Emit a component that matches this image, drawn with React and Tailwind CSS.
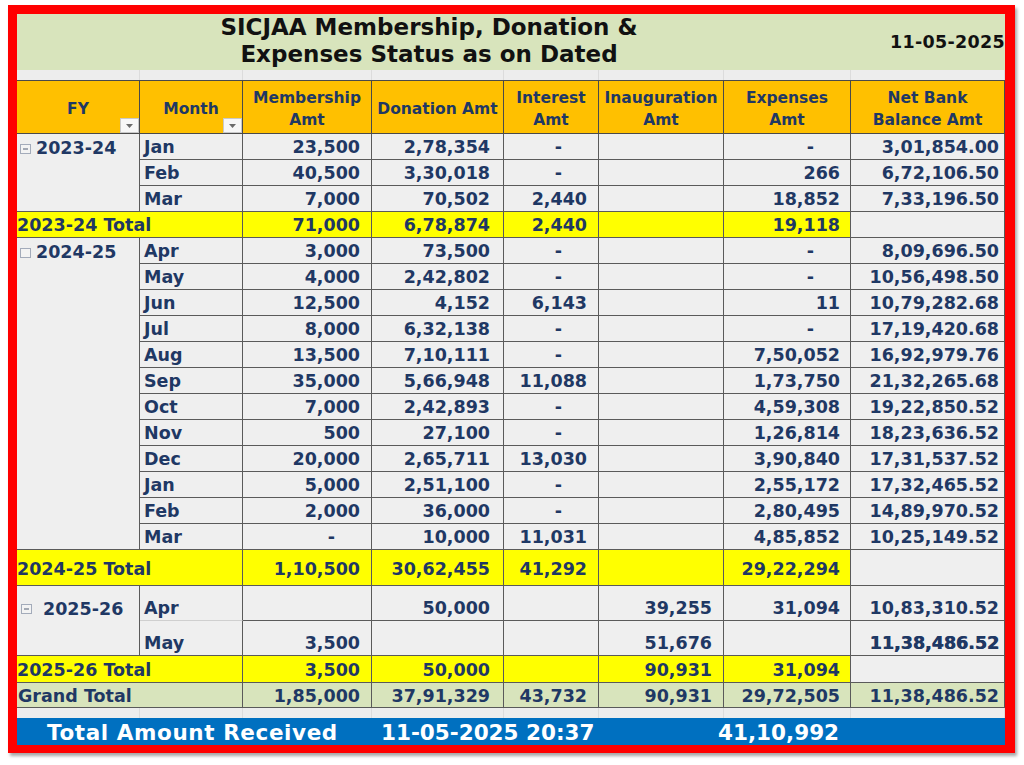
import { Fragment } from 'react';

const COLS = 'grid grid-cols-[123px_103px_129px_132px_95px_125px_127px_154px]';
const LINE = 'border-r border-b border-[#5a5a5a]';
const PADS = ['pr-[11px]', 'pr-[13px]', 'pr-[11px]', 'pr-[11px]', 'pr-[10px]', 'pr-[5px]'];

const fy2324 = [
  ['Jan', '23,500', '2,78,354', '-', '', '-', '3,01,854.00'],
  ['Feb', '40,500', '3,30,018', '-', '', '266', '6,72,106.50'],
  ['Mar', '7,000', '70,502', '2,440', '', '18,852', '7,33,196.50'],
];

const fy2425 = [
  ['Apr', '3,000', '73,500', '-', '', '-', '8,09,696.50'],
  ['May', '4,000', '2,42,802', '-', '', '-', '10,56,498.50'],
  ['Jun', '12,500', '4,152', '6,143', '', '11', '10,79,282.68'],
  ['Jul', '8,000', '6,32,138', '-', '', '-', '17,19,420.68'],
  ['Aug', '13,500', '7,10,111', '-', '', '7,50,052', '16,92,979.76'],
  ['Sep', '35,000', '5,66,948', '11,088', '', '1,73,750', '21,32,265.68'],
  ['Oct', '7,000', '2,42,893', '-', '', '4,59,308', '19,22,850.52'],
  ['Nov', '500', '27,100', '-', '', '1,26,814', '18,23,636.52'],
  ['Dec', '20,000', '2,65,711', '13,030', '', '3,90,840', '17,31,537.52'],
  ['Jan', '5,000', '2,51,100', '-', '', '2,55,172', '17,32,465.52'],
  ['Feb', '2,000', '36,000', '-', '', '2,80,495', '14,89,970.52'],
  ['Mar', '-', '10,000', '11,031', '', '4,85,852', '10,25,149.52'],
];

const fy2526 = [
  ['Apr', '', '50,000', '', '39,255', '31,094', '10,83,310.52'],
  ['May', '3,500', '', '', '51,676', '', '11,38,486.52'],
];

function Toggle({ minus }) {
  return (
    <svg width="11" height="10" viewBox="0 0 11 10" className="shrink-0">
      <rect x="0.5" y="0.5" width="10" height="9" fill="#f3f3f3" stroke="#a3abba" />
      {minus && <line x1="3" x2="8" y1="5" y2="5" stroke="#6d7789" strokeWidth="1.2" />}
    </svg>
  );
}

function Filter() {
  return (
    <div className="absolute right-0 bottom-0 w-[19px] h-[15px] bg-[#f7f7f7] border border-[#c9c9c9] flex items-center justify-center">
      <svg width="7" height="4" viewBox="0 0 7 4">
        <path d="M0 0 L7 0 L3.5 4 Z" fill="#6b6b6b" />
      </svg>
    </div>
  );
}

function DataRow({ row, tall, lightMonth, heavyNet }) {
  const [month, ...vals] = row;
  const h = tall ? 'h-[35px] items-end pb-[3px]' : 'h-[26px] items-center pt-[3px]';
  return (
    <>
      <div className={`flex ${h} pl-[4px] bg-[#efefef] border-r border-b border-r-[#5a5a5a] ${lightMonth ? 'border-b-[#cfcfcf]' : 'border-b-[#5a5a5a]'}`}>
        {month}
      </div>
      {vals.map((v, i) => (
        <div
          key={i}
          className={`flex ${h} justify-end bg-[#efefef] ${LINE} ${v === '-' ? 'pr-[36px]' : PADS[i]} ${heavyNet && i === 5 ? '[text-shadow:0.6px_0_0_#1f3864]' : ''}`}
        >
          {v}
        </div>
      ))}
    </>
  );
}

function TotalRow({ label, vals, h }) {
  return (
    <>
      <div className={`col-span-2 flex items-center ${h} bg-[#ffff00] border-b border-r border-[#5a5a5a]`}>{label}</div>
      {vals.map((v, i) => (
        <div key={i} className={`flex items-center ${h} justify-end ${i === 5 ? 'bg-[#efefef]' : 'bg-[#ffff00]'} ${LINE} ${PADS[i]}`}>
          {v}
        </div>
      ))}
    </>
  );
}

function YearCell({ span, label, minus, wide }) {
  return (
    <div className={`${span} bg-[#efefef] ${LINE}`}>
      <div className={`flex ${wide ? 'h-[35px] items-end pb-[3px] pl-[4px]' : 'h-[26px] items-center pt-[3px] pl-[3px]'}`}>
        <div className={`flex items-center ${wide ? 'gap-[11px]' : 'gap-[5px]'}`}>
          <Toggle minus={minus} />
          <span>{label}</span>
        </div>
      </div>
    </div>
  );
}

function Spacer() {
  return (
    <div className={`${COLS} h-[10px] bg-[#ededed]`}>
      {[0, 1, 2, 3, 4, 5, 6, 7].map((i) => (
        <div key={i} className="border-r border-[#dcdcdc]" />
      ))}
    </div>
  );
}

export default function App() {
  const headers = [
    ['FY'],
    ['Month'],
    ['Membership', 'Amt'],
    ['Donation Amt'],
    ['Interest', 'Amt'],
    ['Inauguration', 'Amt'],
    ['Expenses', 'Amt'],
    ['Net Bank', 'Balance Amt'],
  ];

  return (
    <div className="min-h-screen bg-white pt-[5px] pl-[8px] font-['DejaVu_Sans',sans-serif] font-bold">
      <div className="w-[1007px] border-[9px] border-r-[10px] border-b-[8px] border-[#ff0000] shadow-[2px_3px_3px_rgba(0,0,0,0.35)]">
        <div className="flex h-[56px] bg-[#d8e4bc] text-[#111]">
          <div className="w-[824px] flex flex-col justify-center items-center text-[23px] leading-[27px] pb-[3px]">
            <div>SICJAA Membership, Donation &amp;</div>
            <div>Expenses Status as on Dated</div>
          </div>
          <div className="flex-1 flex items-center justify-end text-[17.5px] tracking-[0.3px] pt-[1px]">11-05-2025</div>
        </div>

        <Spacer />

        <div className={`${COLS} h-[54px] bg-[#ffc000] border-t border-[#4a4a4a] text-[#1f3864] text-[15.5px] leading-[22px]`}>
          {headers.map((lines, i) => (
            <div key={i} className="relative flex flex-col items-center justify-center text-center border-r border-b border-[#4a4a4a] pt-[3px]">
              {lines.map((l) => (
                <div key={l}>{l}</div>
              ))}
              {i < 2 && <Filter />}
            </div>
          ))}
        </div>

        <div className={`${COLS} text-[#1f3864] text-[17.5px] leading-none`}>
          <YearCell span="row-span-3" label="2023-24" minus />
          {fy2324.map((r, i) => (
            <Fragment key={i}>
              <DataRow row={r} />
            </Fragment>
          ))}
          <TotalRow label="2023-24 Total" vals={['71,000', '6,78,874', '2,440', '', '19,118', '']} h="h-[26px] pt-[3px]" />

          <YearCell span="row-span-12" label="2024-25" />
          {fy2425.map((r, i) => (
            <Fragment key={i}>
              <DataRow row={r} />
            </Fragment>
          ))}
          <TotalRow label="2024-25 Total" vals={['1,10,500', '30,62,455', '41,292', '', '29,22,294', '']} h="h-[36px] pt-[5px]" />

          <YearCell span="row-span-2" label="2025-26" minus wide />
          <DataRow row={fy2526[0]} tall lightMonth />
          <DataRow row={fy2526[1]} tall heavyNet />
          <TotalRow label="2025-26 Total" vals={['3,500', '50,000', '', '90,931', '31,094', '']} h="h-[27px] pt-[3px]" />

          <div className="col-span-2 flex items-center h-[25px] pt-[3px] pl-[1px] bg-[#d8e4bc] border-b border-r border-[#5a5a5a]">Grand Total</div>
          {['1,85,000', '37,91,329', '43,732', '90,931', '29,72,505', '11,38,486.52'].map((v, i) => (
            <div key={i} className={`flex items-center h-[25px] pt-[3px] justify-end bg-[#d8e4bc] ${LINE} ${PADS[i]}`}>
              {v}
            </div>
          ))}
        </div>

        <Spacer />

        <div className="flex items-start h-[27px] pt-[3px] bg-[#0070c0] text-white text-[21.5px] leading-[24px]">
          <div className="w-[364px] pl-[30px] tracking-[0.6px]">Total Amount Received</div>
          <div className="w-[337px]">11-05-2025 20:37</div>
          <div>41,10,992</div>
        </div>
      </div>
    </div>
  );
}
